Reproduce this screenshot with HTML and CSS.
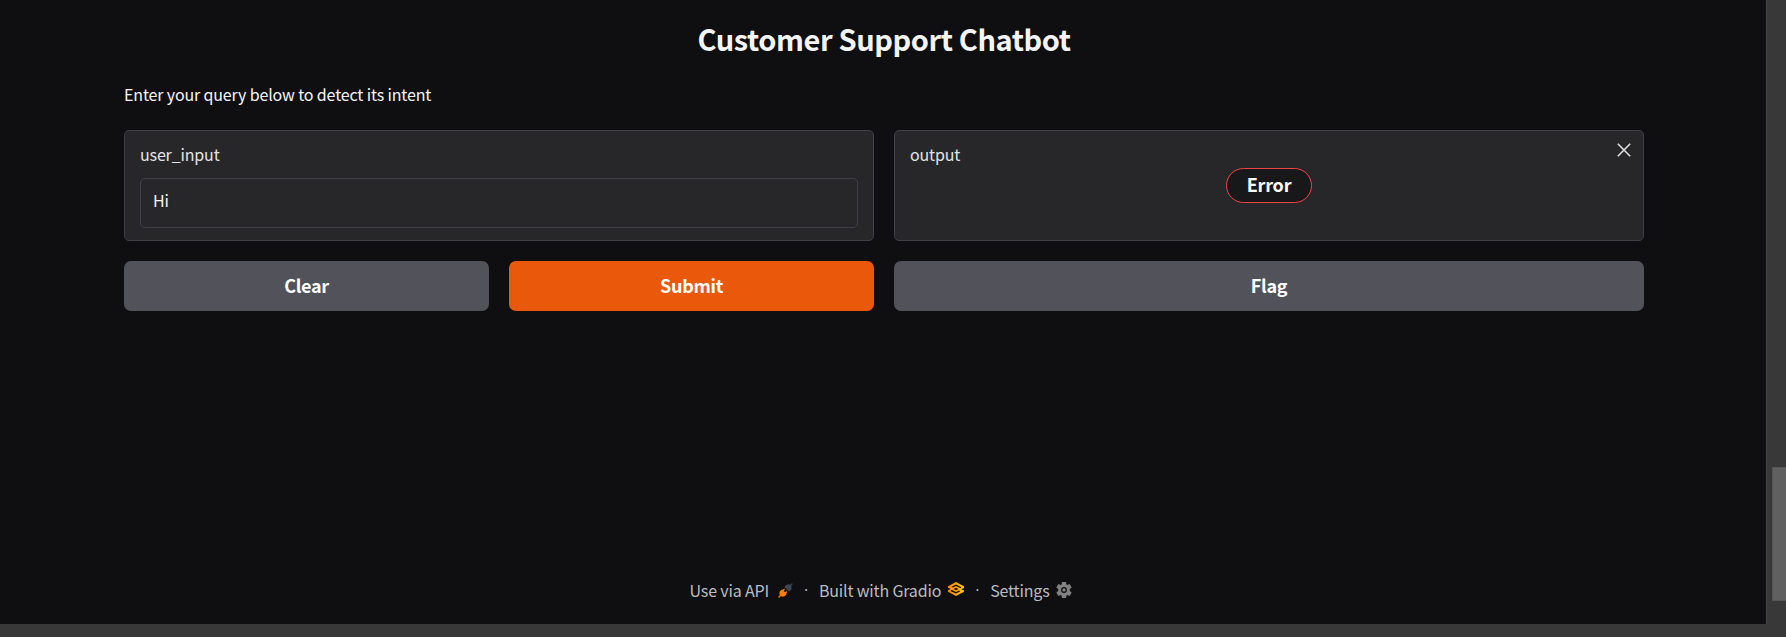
FILE: index.html
```html
<!DOCTYPE html>
<html lang="en">
<head>
<meta charset="utf-8">
<title>Customer Support Chatbot</title>
<link rel="stylesheet" href="styles.css">
</head>
<body>
<div class="window">
  <div class="page">
    <main class="app">
      <h1 class="title">Customer Support Chatbot</h1>
      <p class="description">Enter your query below to detect its intent</p>
      <div class="columns">
        <section class="column">
          <div class="block">
            <label class="label" for="query">user_input</label>
            <input class="textbox" id="query" type="text" value="Hi">
          </div>
          <div class="actions">
            <button class="btn">Clear</button>
            <button class="btn btn-primary">Submit</button>
          </div>
        </section>
        <section class="column">
          <div class="block output">
            <div class="label">output</div>
            <span class="error">Error</span>
            <svg class="close" viewBox="0 0 14 14"><path d="M.8.8 13.200 13.200M13.200.8.8 13.200"/></svg>
          </div>
          <div class="actions">
            <button class="btn">Flag</button>
          </div>
        </section>
      </div>
    </main>
    <footer class="footer">
      <span class="link">Use via API
        <svg class="icon-api" viewBox="0 0 28 28"><path fill="#3c4555" d="M26.94 2.94a1.33 1.33 0 0 0-1.88-1.88L22.57 3.54c-1.45-.95-3.04-1.11-4.4-.9-1.62.25-3.06 1.03-3.78 1.75l-2 2a1.33 1.33 0 0 0 0 1.89l7.33 7.33a1.33 1.33 0 0 0 1.89 0l2-2c.72-.72 1.5-2.16 1.75-3.79.2-1.36.04-2.94-.9-4.39z"/><path fill="#ff7c00" d="M12.28 12.94a1.33 1.33 0 0 0-1.89-1.88l-1.72 1.72-.39-.39a1.33 1.33 0 0 0-1.89 0l-2 2c-.72.72-1.5 2.16-1.75 3.79-.2 1.36-.05 2.94.9 4.39l-2.48 2.49a1.33 1.33 0 0 0 1.88 1.88l2.49-2.48c1.45.95 3.03 1.1 4.39.9 1.63-.25 3.07-1.03 3.79-1.75l2-2a1.33 1.33 0 0 0 0-1.89l-.39-.39 1.72-1.72a1.33 1.33 0 0 0-1.88-1.89l-1.73 1.73-2.78-2.78z"/></svg>
      </span>
      <span class="dot">·</span>
      <span class="link">Built with Gradio
        <svg class="icon-gradio" viewBox="0 0 16 14"><defs><linearGradient id="g" x1="0" x2="1"><stop offset="0" stop-color="#ff8500"/><stop offset="1" stop-color="#ffc600"/></linearGradient></defs><path d="M8 0 16 4.2V6L13.4 7.2 16 8.4V9.8L8 14 0 9.8V8.2L2.6 7 0 5.8V4.2zM8 2.5 3.6 4.8 5 5.5 8 4l4.6 2.2L13.4 5.3zM2.6 9.2 8 11.5 12.4 9.2 11 8.5 8 10 3.4 7.8zM8 5.8 5.7 7 8 8.2 10.4 7z" fill="url(#g)" fill-rule="evenodd"/></svg>
      </span>
      <span class="dot">·</span>
      <span class="link">Settings
        <svg class="icon-gear" viewBox="0 0 24 24"><path fill="#808080" fill-rule="evenodd" d="M9 0h6l.6 3.5 1.5.9 3.4-1.3 3 5.2-2.8 2.2v3l2.8 2.2-3 5.2-3.4-1.3-1.5.9L15 24H9l-.6-3.5-1.5-.9-3.4 1.3-3-5.2 2.8-2.2v-3L.5 8.3l3-5.2 3.4 1.3 1.5-.9zM12 7.6a4.4 4.4 0 1 0 0 8.800 4.4 4.400 0 0 0 0-8.800z"/><circle cx="12" cy="12" r="2.6" fill="#808080"/></svg>
      </span>
    </footer>
  </div>
  <div class="scrollbar"><div class="thumb"></div></div>
  <div class="bottom-edge"></div>
</div>
</body>
</html>
```

FILE: styles.css
```css
* { box-sizing: border-box; }
body {
  margin: 0;
  overflow: hidden;
  background: #0f0f11;
  color: #f4f4f5;
  font: 16px/24px "Noto Sans CJK SC", "Open Sans", sans-serif;
}
.window {
  display: grid;
  grid-template: 624px 13px / 1766px 20px;
  height: 637px;
}
.page {
  display: flex;
  flex-direction: column;
  justify-content: space-between;
  padding: 18px 122px 22px 124px;
}
.title {
  margin: 0;
  font-size: 29px;
  font-weight: 600;
  line-height: 40px;
  letter-spacing: -0.4px;
  text-align: center;
}
.description { margin: 24px 0; line-height: 24px; letter-spacing: -0.145px; }
.columns {
  display: grid;
  grid-template-columns: 1fr 1fr;
  gap: 20px;
}
.column { display: flex; flex-direction: column; gap: 20px; }
.block {
  position: relative;
  height: 111px;
  padding: 11px 15px;
  border: 1px solid #3f3f46;
  border-radius: 5px;
  background: #27272a;
}
.label { display: block; line-height: 25px; letter-spacing: -0.15px; color: #e4e4e7; }
.textbox {
  display: block;
  width: 100%;
  height: 50px;
  margin-top: 11px;
  padding: 0 12px 6px;
  border: 1px solid #3f3f46;
  border-radius: 5px;
  background: #27272a;
  color: #f4f4f5;
  font: inherit;
  letter-spacing: -0.2px;
}
.error {
  position: absolute;
  top: 37px;
  left: 331px;
  width: 86px;
  height: 35px;
  border: 1px solid #ef4444;
  border-radius: 18px;
  background: #18181b;
  color: #fff;
  font-size: 18px;
  font-weight: 600;
  line-height: 31px;
  letter-spacing: -0.2px;
  text-align: center;
}
.close {
  position: absolute;
  top: 12px;
  right: 12px;
  width: 14px;
  height: 14px;
  fill: none;
  stroke: #e4e4e7;
  stroke-width: 1.5;
}
.actions { display: flex; gap: 20px; }
.btn {
  flex: 1;
  height: 50px;
  padding: 0 0 2px;
  border: 0;
  border-radius: 7px;
  background: #52525b;
  color: #fff;
  font: inherit;
  font-size: 18px;
  font-weight: 600;
  letter-spacing: -0.3px;
}
.btn-primary { background: #ea580c; }
.footer {
  display: flex;
  justify-content: center;
  align-items: center;
  padding-right: 6px;
  color: #bbbbc2;
  letter-spacing: -0.17px;
}
.link { display: flex; align-items: center; }
.dot { width: 26px; font-family: "Open Sans", sans-serif; text-align: center; }
.icon-api { width: 15px; height: 15px; margin-left: 9px; }
.icon-gradio { width: 16px; height: 14px; margin: -2px 0 0 7px; }
.icon-gear { width: 16px; height: 16px; margin-left: 7px; }
.scrollbar {
  padding: 467px 0 0 5px;
  border-left: 1px solid #404040;
  background: #383838;
}
.thumb { height: 134px; border: 1px solid #555; border-right: 0; background: #606060; }
.bottom-edge { grid-column: 1 / 3; background: #383838; }
```
